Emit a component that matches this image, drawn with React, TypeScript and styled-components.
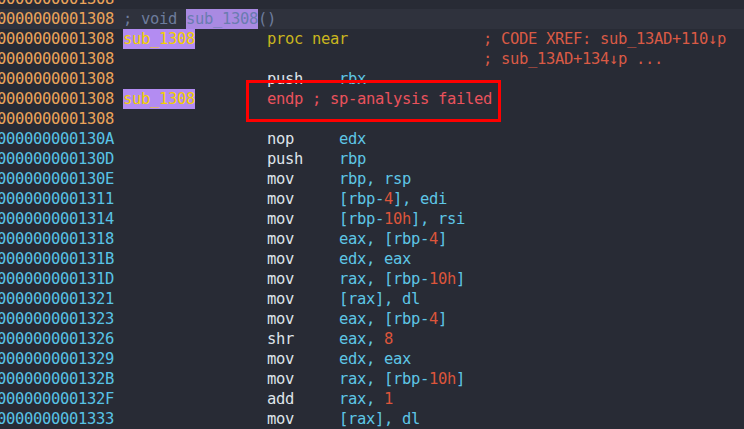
import React from "react";
import styled, { createGlobalStyle } from "styled-components";

const Global = createGlobalStyle`
  html, body { margin: 0; padding: 0; background: #282b35; }
  body { overflow: hidden; }
`;

const Screen = styled.div`
  position: relative;
  width: 744px;
  height: 429px;
  overflow: hidden;
  background: #282b35;
  font-family: "DejaVu Sans Mono", "Liberation Mono", monospace;
  font-size: 15.5px;
  letter-spacing: -0.33px;
`;

const Listing = styled.div`
  display: flex;
  flex-direction: column;
  margin: -11px 0 0 -3px;
`;

const Row = styled.div<{ $hl?: boolean }>`
  display: flex;
  height: 20px;
  line-height: 20px;
  white-space: pre;
  background: ${(p) => (p.$hl ? "#2f323d" : "transparent")};
`;

const Addr = styled.span<{ $fn?: boolean }>`
  width: 126px;
  flex: none;
  color: ${(p) => (p.$fn ? "#eba45a" : "#58c3e6")};
`;

const LabelCol = styled.span`
  width: 144px;
  flex: none;
`;

const Label = styled.span`
  padding: 1px 0;
  background: #b38cf2;
  color: #f4d000;
`;

const MnemCol = styled.span`
  width: 72px;
  flex: none;
  color: #dfe4ea;
`;

const OpCol = styled.span`
  width: 144px;
  flex: none;
  color: #5ec6e6;
`;

const Num = styled.span`
  color: #dc553b;
`;

const Comment = styled.span`
  color: #d95a45;
`;

const Directive = styled.span`
  color: #c9b51e;
`;

const Endp = styled.span`
  color: #ea525c;
`;

const Proto = styled.span`
  color: #6d7c9c;
`;

const ProtoName = styled.span`
  padding: 1px 0;
  background: #a98ae2;
  color: #6a7cb0;
`;

const Highlight = styled.div`
  position: absolute;
  left: 246px;
  top: 80px;
  width: 255px;
  height: 42px;
  box-sizing: border-box;
  border: 3px solid #ff0000;
  pointer-events: none;
`;

type Ins = { a: string; m: string; o: React.ReactNode };

const n = (v: string) => <Num>{v}</Num>;

const code: Ins[] = [
  { a: "000000000130A", m: "nop", o: "edx" },
  { a: "000000000130D", m: "push", o: "rbp" },
  { a: "000000000130E", m: "mov", o: "rbp, rsp" },
  { a: "0000000001311", m: "mov", o: <>[rbp-{n("4")}], edi</> },
  { a: "0000000001314", m: "mov", o: <>[rbp-{n("10h")}], rsi</> },
  { a: "0000000001318", m: "mov", o: <>eax, [rbp-{n("4")}]</> },
  { a: "000000000131B", m: "mov", o: "edx, eax" },
  { a: "000000000131D", m: "mov", o: <>rax, [rbp-{n("10h")}]</> },
  { a: "0000000001321", m: "mov", o: "[rax], dl" },
  { a: "0000000001323", m: "mov", o: <>eax, [rbp-{n("4")}]</> },
  { a: "0000000001326", m: "shr", o: <>eax, {n("8")}</> },
  { a: "0000000001329", m: "mov", o: "edx, eax" },
  { a: "000000000132B", m: "mov", o: <>rax, [rbp-{n("10h")}]</> },
  { a: "000000000132F", m: "add", o: <>rax, {n("1")}</> },
  { a: "0000000001333", m: "mov", o: "[rax], dl" },
];

const FN = "0000000001308";

export default function App() {
  return (
    <>
      <Global />
      <Screen>
        <Listing>
          <Row>
            <Addr $fn>{FN}</Addr>
          </Row>
          <Row $hl>
            <Addr $fn>{FN}</Addr>
            <Proto>
              ; void <ProtoName>sub_1308</ProtoName>()
            </Proto>
          </Row>
          <Row>
            <Addr $fn>{FN}</Addr>
            <LabelCol>
              <Label>sub_1308</Label>
            </LabelCol>
            <MnemCol>
              <Directive>proc near</Directive>
            </MnemCol>
            <OpCol />
            <Comment>; CODE XREF: sub_13AD+110↓p</Comment>
          </Row>
          <Row>
            <Addr $fn>{FN}</Addr>
            <LabelCol />
            <MnemCol />
            <OpCol />
            <Comment>; sub_13AD+134↓p ...</Comment>
          </Row>
          <Row>
            <Addr $fn>{FN}</Addr>
            <LabelCol />
            <MnemCol>push</MnemCol>
            <OpCol>rbx</OpCol>
          </Row>
          <Row>
            <Addr $fn>{FN}</Addr>
            <LabelCol>
              <Label>sub_1308</Label>
            </LabelCol>
            <Endp>endp ; sp-analysis failed</Endp>
          </Row>
          <Row>
            <Addr $fn>{FN}</Addr>
          </Row>
          {code.map((c) => (
            <Row key={c.a}>
              <Addr>{c.a}</Addr>
              <LabelCol />
              <MnemCol>{c.m}</MnemCol>
              <OpCol>{c.o}</OpCol>
            </Row>
          ))}
        </Listing>
        <Highlight />
      </Screen>
    </>
  );
}
